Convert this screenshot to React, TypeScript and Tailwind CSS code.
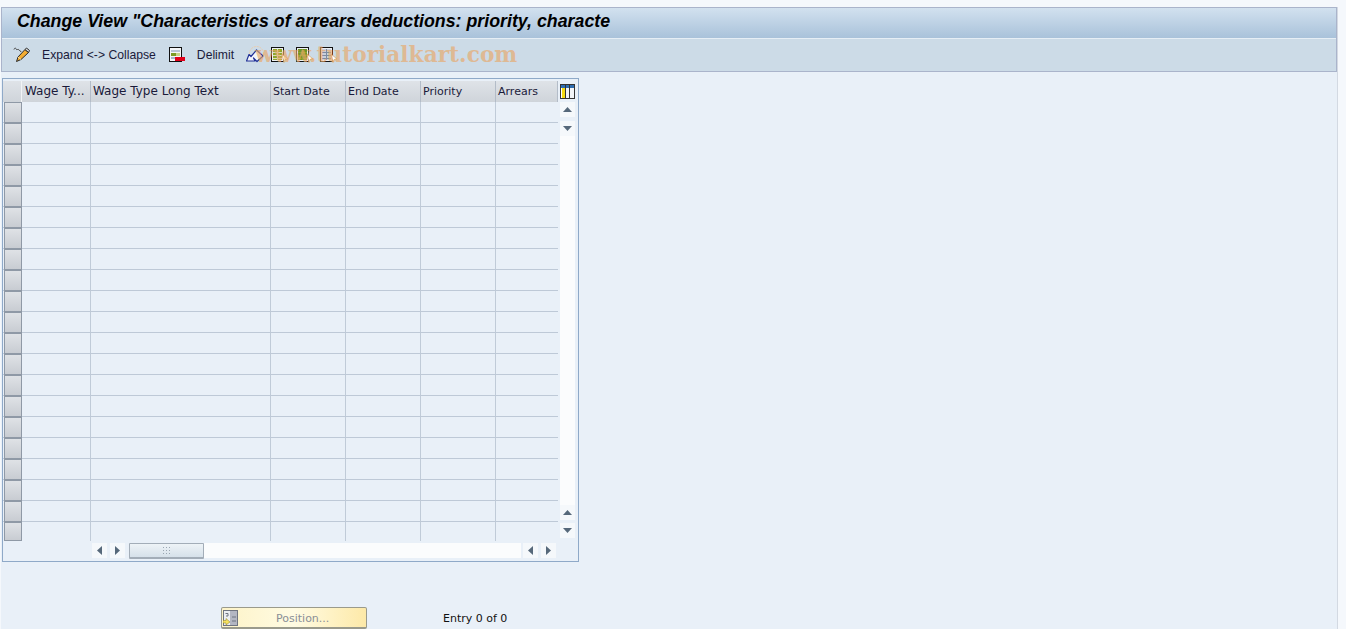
import type { ReactNode } from "react";

const columns = [
  { label: "Wage Ty...", width: "w-[69px]", size: "text-[12px] pl-[3px]" },
  { label: "Wage Type Long Text", width: "w-[180px]", size: "text-[12px] pl-[2px]" },
  { label: "Start Date", width: "w-[75px]", size: "text-[11px] pl-[2px]" },
  { label: "End Date", width: "w-[75px]", size: "text-[11px] pl-[2px]" },
  { label: "Priority", width: "w-[75px]", size: "text-[11px] pl-[2px]" },
  { label: "Arrears", width: "w-[62px]", size: "text-[11px] pl-[2px]" },
];

const rows = Array.from({ length: 21 }, (_, i) => i);

const ScrollBtn = ({ children }: { children: ReactNode }) => (
  <div className="flex h-[15px] w-[15px] items-center justify-center bg-[#f5f8fb]">{children}</div>
);

const Up = () => (
  <svg width="9" height="5" viewBox="0 0 9 5"><path d="M4.5 0L9 5H0z" fill="#56687a" /></svg>
);
const Down = () => (
  <svg width="9" height="5" viewBox="0 0 9 5"><path d="M0 0H9L4.5 5z" fill="#56687a" /></svg>
);
const Left = () => (
  <svg width="5" height="9" viewBox="0 0 5 9"><path d="M5 0V9L0 4.5z" fill="#56687a" /></svg>
);
const Right = () => (
  <svg width="5" height="9" viewBox="0 0 5 9"><path d="M0 0L5 4.5L0 9z" fill="#56687a" /></svg>
);

const GripDots = () => (
  <svg width="9" height="7" viewBox="0 0 9 7" fill="#9aa6b2">
    <rect x="1" y="0" width="1" height="1" /><rect x="4" y="0" width="1" height="1" /><rect x="7" y="0" width="1" height="1" />
    <rect x="1" y="3" width="1" height="1" /><rect x="4" y="3" width="1" height="1" /><rect x="7" y="3" width="1" height="1" />
    <rect x="1" y="6" width="1" height="1" /><rect x="4" y="6" width="1" height="1" /><rect x="7" y="6" width="1" height="1" />
  </svg>
);

const PencilIcon = () => (
  <svg width="17" height="16" viewBox="0 0 17 16" fill="none">
    <path d="M1 2.500C1.500 .5 3 1 3.500 2.500S5 1 5.500 2.500 7.500 3 8 5" stroke="#444" strokeWidth="1" />
    <path d="M3.500 14.500L5 10L12 2.500L15.500 5.500L8 12.500z" fill="#f4ad32" stroke="#2a2a2a" strokeWidth="1" strokeLinejoin="round" />
    <path d="M12 2.500L13.500 1L16.500 3.500L15.500 5.500z" fill="#d8d8d8" stroke="#2a2a2a" strokeWidth="1" strokeLinejoin="round" />
    <path d="M5 10L8 12.500" stroke="#fbe2a8" strokeWidth="1" />
  </svg>
);

const DelimitIcon = () => (
  <svg width="17" height="16" viewBox="0 0 17 16">
    <rect x="0.500" y="0.500" width="12" height="14" fill="#f4f6f8" stroke="#111" />
    <rect x="2" y="3" width="9" height="2" fill="#b9c3d4" />
    <rect x="2" y="6" width="5" height="3" fill="#7d9a24" />
    <rect x="7" y="6" width="4" height="3" fill="#c7d28a" />
    <rect x="2" y="10" width="6" height="2" fill="#a8b4cb" />
    <rect x="6" y="10" width="10" height="4" fill="#e2001a" />
  </svg>
);

const ReturnIcon = () => (
  <svg width="18" height="18" viewBox="0 0 18 18" fill="none">
    <circle cx="10.500" cy="7.500" r="7" stroke="#eccbaa" strokeWidth="1" strokeDasharray="2 1" />
    <path d="M0.500 15L3 8.500L5 10.500L10.500 4L17 10L11 15.500L7.500 12L9 15z" fill="#f2f5fa" stroke="#1f2f96" strokeWidth="1.200" strokeLinejoin="round" />
  </svg>
);

const SheetArrowIcon = ({ fill, lines }: { fill: string; lines: string }) => (
  <svg width="18" height="16" viewBox="0 0 18 16">
    <rect x="0.500" y="0.500" width="12" height="14" fill="#eef1f5" stroke="#111" />
    <rect x="2" y="2" width="9" height="11" fill={fill} />
    <path d="M2 5.500H11M2 8.500H11M2 11.500H11M6.500 2V13" stroke={lines} strokeWidth="1" />
    <path d="M11 7L17 12L14 12.500L13 15.500z" fill="#fff" stroke="#d9a05c" strokeWidth="0.700" />
  </svg>
);

const LayoutIcon = () => (
  <svg width="15" height="15" viewBox="0 0 15 15">
    <rect x="0.500" y="0.500" width="14" height="14" fill="#fff" stroke="#333" />
    <rect x="1" y="1" width="13" height="3" fill="#2d6cb0" />
    <rect x="2" y="4" width="3" height="10" fill="#f7dc10" />
    <rect x="5" y="1" width="1" height="13" fill="#333" />
    <rect x="9" y="1" width="1" height="13" fill="#333" />
    <rect x="6" y="4" width="3" height="10" fill="#f2f4f7" />
    <rect x="10" y="4" width="4" height="10" fill="#f2f4f7" />
  </svg>
);

const PositionIcon = () => (
  <svg width="15" height="16" viewBox="0 0 15 16">
    <rect x="0.500" y="0.500" width="14" height="15" fill="#b3b6c2" stroke="#6f7480" />
    <rect x="1" y="1" width="6" height="14" fill="#eceef2" />
    <path d="M9 7H13M9 11H13" stroke="#6f7480" strokeWidth="1" />
    <path d="M2.500 3.500H5V6H3" stroke="#6f7480" fill="none" />
    <path d="M0 10.500H3V8.500L7 12L3 15V13H0z" fill="#f6e25f" stroke="#8a7a20" strokeWidth="0.500" />
  </svg>
);

export default function App() {
  return (
    <div className="relative h-[629px] w-[1346px] overflow-hidden bg-[#f5f8fc] font-['DejaVu_Sans',sans-serif] text-[11px] text-[#1a1a3a]">
      <div className="pt-[7px]">
        <div className="ml-[1px] flex h-[622px] w-[1337px] flex-col border-r border-[#d3d9e2] bg-[#e9f0f8]">
          <header className="border border-[#aab4cb]">
            <div className="flex h-[30px] items-center bg-gradient-to-b from-[#d2e1ef] to-[#a9c2da] pb-[4px] pl-[15px] font-['Liberation_Sans',sans-serif] text-[17.8px] font-bold italic text-black">
              Change View "Characteristics of arrears deductions: priority, characte
            </div>
            <div className="flex h-[33px] items-center border-t border-t-[#e6eef5] bg-[#ccdbe7] pl-[11px] font-['Liberation_Sans',sans-serif] text-[12.2px]">
              <PencilIcon />
              <span className="ml-[12px]">Expand &lt;-&gt; Collapse</span>
              <span className="ml-[13px] flex"><DelimitIcon /></span>
              <span className="ml-[11px]">Delimit</span>
              <span className="ml-[12px] flex"><ReturnIcon /></span>
              <span className="ml-[7px] flex"><SheetArrowIcon fill="#8fa52a" lines="#d7dcc0" /></span>
              <span className="ml-[7px] flex"><SheetArrowIcon fill="#6f9428" lines="#8fa52a" /></span>
              <span className="ml-[6px] flex"><SheetArrowIcon fill="#c9d0dc" lines="#7d8aa0" /></span>
            </div>
          </header>

          <div className="ml-[1px] mt-[6px] h-[484px] w-[577px] border border-[#8fa9c8] pt-[2px]">
            <div className="flex">
              <div className="w-[555px]">
                <div className="flex h-[21px] bg-gradient-to-b from-[#dfe3e8] to-[#cfd4da]">
                  <div className="w-[19px] border-r border-[#f2f4f7]" />
                  {columns.map((c) => (
                    <div key={c.label} className={`${c.width} ${c.size} truncate border-r border-[#b3bcc8] leading-[21px]`}>
                      {c.label}
                    </div>
                  ))}
                </div>
                {rows.map((r) => (
                  <div key={r} className="group flex h-[21px] border-b border-[#bec9d7] last:h-[19px] last:border-b-0">
                    <div className="w-[19px] pl-[1px]">
                      <div className="h-[21px] w-[18px] border border-[#8f99a6] bg-gradient-to-b from-[#dfe2e6] to-[#c8ccd2] group-last:h-[19px]" />
                    </div>
                    {columns.map((c, i) => (
                      <div key={c.label} className={`${c.width} ${i === 5 ? "" : "border-r border-[#c0cbd8]"}`} />
                    ))}
                  </div>
                ))}
              </div>
              <div className="flex w-[17px] flex-col pl-[2px]">
                <div className="flex h-[21px] items-center"><LayoutIcon /></div>
                <ScrollBtn><Up /></ScrollBtn>
                <div className="mt-[4px]"><ScrollBtn><Down /></ScrollBtn></div>
                <div className="h-[369px] bg-[#fbfcfd]" />
                <ScrollBtn><Up /></ScrollBtn>
                <div className="mt-[3px]"><ScrollBtn><Down /></ScrollBtn></div>
              </div>
            </div>
            <div className="ml-[89px] mt-[2px] flex h-[15px] items-start">
              <ScrollBtn><Left /></ScrollBtn>
              <div className="ml-[3px]"><ScrollBtn><Right /></ScrollBtn></div>
              <div className="ml-[4px] flex h-[16px] w-[75px] items-center justify-center rounded-[1px] border border-b-2 border-[#a3adb8] bg-gradient-to-b from-[#eef3f7] to-[#d6e1ea]"><GripDots /></div>
              <div className="h-[15px] w-[317px] bg-[#fbfcfd]" />
              <div className="ml-[2px]"><ScrollBtn><Left /></ScrollBtn></div>
              <div className="ml-[3px]"><ScrollBtn><Right /></ScrollBtn></div>
            </div>
          </div>

          <div className="mt-[45px] flex items-center">
            <button className="ml-[220px] flex h-[22px] w-[146px] items-center rounded-[2px] border border-b-2 border-[#9a9a8c] bg-gradient-to-r from-[#fdf3c8] via-[#fffbe2] to-[#fde9a8] pl-[1px] text-[#8a8f96]">
              <PositionIcon />
              <span className="ml-[38px] pt-[3px]">Position...</span>
            </button>
            <span className="ml-[76px] pt-[2px] text-[#111]">Entry 0 of 0</span>
          </div>
        </div>
      </div>

      <div className="absolute left-[255px] top-[39px] font-['DejaVu_Serif',serif] text-[21.7px] font-bold text-[#e8a868] opacity-65">
        www.tutorialkart.com
      </div>
    </div>
  );
}
